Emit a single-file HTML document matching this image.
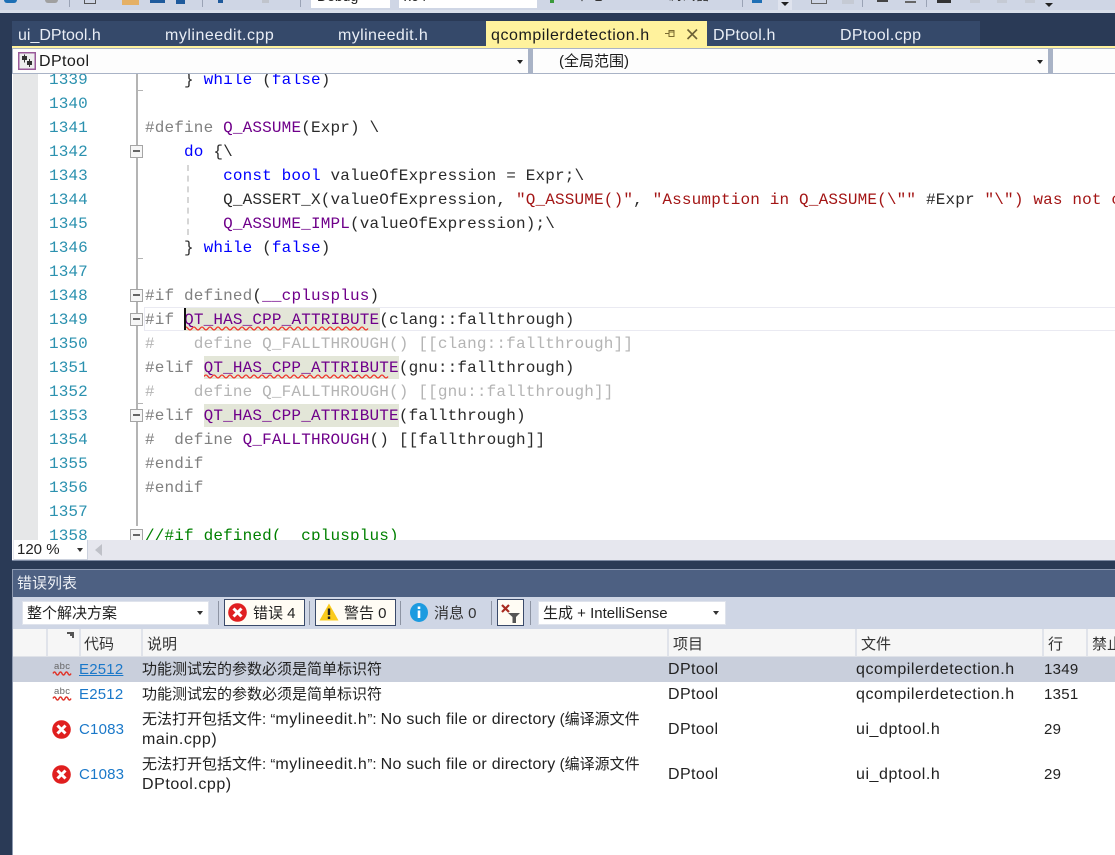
<!DOCTYPE html>
<html><head><meta charset="utf-8"><style>
html,body{margin:0;padding:0;width:1115px;height:855px;overflow:hidden;background:#fff}
#r{position:relative;width:1115px;height:855px;overflow:hidden;background:#fff;font-family:"Liberation Sans","Noto Sans CJK SC",sans-serif;font-size:15px;color:#222}
.a{position:absolute}
.t{position:absolute;white-space:pre;line-height:20px}
.l{font-size:16px;letter-spacing:.55px}
.tab{position:absolute;top:25px;line-height:22px;color:#e8edf5;white-space:pre;font-size:16px;letter-spacing:.5px}
#code{position:absolute;left:145px;top:74px;width:970px;height:466px;overflow:hidden;font-family:"Liberation Mono",monospace;font-size:16px;letter-spacing:.16px;color:#2a2a2a}
#code div{position:absolute;left:0;white-space:pre;line-height:24px;height:24px}
.n{position:absolute;left:49px;font-family:"Liberation Mono",monospace;font-size:16px;letter-spacing:.1px;line-height:24px;color:#2b91af;margin-top:1px}
.k{color:#0000ff}.p{color:#808080}.m{color:#6f008a}.s{color:#a31515}.d{color:#b4b4b4}.g{color:#008000}
.hl{position:absolute;background:#e3e6d8;height:23px}
.fb{position:absolute;left:130px;width:11px;height:11px;border:1px solid #a5a5a5;background:#f6f6f6}
.fb:after{content:"";position:absolute;left:2px;top:4px;width:7px;height:2px;background:#666}
.sep{position:absolute;top:629px;width:2px;height:27px;background:#e0e3ea}
.hd{position:absolute;top:635px;line-height:20px;font-size:15px;color:#333;white-space:pre}
.code{position:absolute;color:#1a78c9;font-size:15px;letter-spacing:.2px;line-height:20px}
</style></head><body><div id="r">

<!-- top toolbar -->
<div class="a" style="left:0;top:0;width:1115px;height:13px;background:#cfd6e5"></div>
<div class="a" style="left:0;top:10px;width:1115px;height:3px;background:#d8dee9"></div>
<div class="a" style="left:4px;top:0;width:13px;height:3px;background:#1c6fb5;border-radius:0 0 7px 7px"></div>
<div class="a" style="left:45px;top:0;width:13px;height:3px;background:#a0a0a0;border-radius:0 0 7px 7px"></div>
<div class="a" style="left:69px;top:0;width:1px;height:7px;background:#9aa3b5"></div>
<div class="a" style="left:84px;top:0;width:10px;height:3px;border:1px solid #555;border-top:0"></div>
<div class="a" style="left:122px;top:0;width:17px;height:5px;background:#e4b066"></div>
<div class="a" style="left:150px;top:0;width:15px;height:3px;background:#1e5a9c"></div>
<div class="a" style="left:176px;top:0;width:9px;height:4px;background:#1e5a9c"></div>
<div class="a" style="left:202px;top:0;width:1px;height:7px;background:#9aa3b5"></div>
<div class="a" style="left:218px;top:0;width:5px;height:3px;background:#1e5a9c"></div>
<div class="a" style="left:262px;top:0;width:7px;height:3px;background:#c0c4cc"></div>
<div class="a" style="left:300px;top:0;width:1px;height:7px;background:#9aa3b5"></div>
<div class="a" style="left:311px;top:0;width:79px;height:8px;background:#fff;overflow:hidden"><span class="a" style="left:6px;top:-12px;font-size:14px;line-height:16px;color:#222">Debug</span></div>
<div class="a" style="left:399px;top:0;width:138px;height:8px;background:#fff;overflow:hidden"><span class="a" style="left:5px;top:-12px;font-size:14px;line-height:16px;color:#222">x64</span></div>
<div class="a" style="left:550px;top:0;width:4px;height:3px;background:#3a9a3a"></div>
<div class="a" style="left:575px;top:0;width:150px;height:4px;overflow:hidden"><span class="a" style="left:0;top:-13px;font-size:14px;line-height:16px;white-space:pre;color:#333">本地 Windows 调试器</span></div>
<div class="a" style="left:742px;top:0;width:1px;height:7px;background:#9aa3b5"></div>
<div class="a" style="left:752px;top:0;width:10px;height:3px;background:#1e6fb5"></div>
<div class="a" style="left:778px;top:0;width:14px;height:10px;background:#dfe3ee"></div>
<div class="a" style="left:781px;top:2px;width:0;height:0;border:4px solid transparent;border-top:4px solid #222"></div>
<div class="a" style="left:811px;top:0;width:14px;height:3px;border:1px solid #666;border-top:0"></div>
<div class="a" style="left:842px;top:0;width:12px;height:4px;background:#c5cad4"></div>
<div class="a" style="left:862px;top:0;width:1px;height:7px;background:#9aa3b5"></div>
<div class="a" style="left:877px;top:0;width:11px;height:2px;background:#444"></div>
<div class="a" style="left:905px;top:1px;width:11px;height:2px;background:#666"></div>
<div class="a" style="left:926px;top:0;width:1px;height:7px;background:#9aa3b5"></div>
<div class="a" style="left:937px;top:0;width:14px;height:3px;background:#333"></div>
<div class="a" style="left:970px;top:0;width:10px;height:3px;background:#c5cad4"></div>
<div class="a" style="left:997px;top:0;width:10px;height:3px;background:#c5cad4"></div>
<div class="a" style="left:1025px;top:0;width:10px;height:3px;background:#c5cad4"></div>
<div class="a" style="left:1045px;top:3px;width:0;height:0;border:4px solid transparent;border-top:4px solid #222"></div>

<!-- navy frame -->
<div class="a" style="left:0;top:13px;width:1115px;height:35px;background:#2a3a56"></div>
<div class="a" style="left:0;top:13px;width:12px;height:842px;background:#2a3a56"></div>
<div class="a" style="left:12px;top:21px;width:968px;height:25px;background:#35496a"></div>
<div class="a" style="left:486px;top:21px;width:221px;height:25px;background:#fff29d"></div>
<div class="a" style="left:12px;top:46px;width:1103px;height:2px;background:#fff29d"></div>
<div class="tab" style="left:18px;letter-spacing:0">ui_DPtool.h</div>
<div class="tab" style="left:165px">mylineedit.cpp</div>
<div class="tab" style="left:338px;letter-spacing:.4px">mylineedit.h</div>
<div class="tab" style="left:491px;color:#1b1b1b;letter-spacing:.55px">qcompilerdetection.h</div>
<div class="tab" style="left:713px;letter-spacing:.15px">DPtool.h</div>
<div class="tab" style="left:840px;letter-spacing:.3px">DPtool.cpp</div>
<svg class="a" style="left:664px;top:28px" width="13" height="12" viewBox="0 0 13 12"><path d="M1 5.5H5M5 2.5V8.5H10V2.5ZM5 4H10" fill="none" stroke="#7a6a30" stroke-width="1"/></svg>
<svg class="a" style="left:686px;top:28px" width="13" height="13" viewBox="0 0 13 13"><path d="M1.5 1.5L11 11M11 1.5L1.5 11" fill="none" stroke="#6d6235" stroke-width="1.6"/></svg>

<!-- navigation bar -->
<div class="a" style="left:12px;top:48px;width:1103px;height:26px;background:#a9b3c6"></div>
<div class="a" style="left:13px;top:49px;width:515px;height:24px;background:#fdfdfd"></div>
<div class="a" style="left:533px;top:49px;width:515px;height:24px;background:#fdfdfd"></div>
<div class="a" style="left:1053px;top:49px;width:62px;height:24px;background:#fdfdfd"></div>
<svg class="a" style="left:18px;top:52px" width="18" height="18" viewBox="0 0 18 18"><rect x=".75" y=".75" width="16.5" height="16.5" fill="#eee" stroke="#9a5a9a" stroke-width="1.5"/><path d="M4 4h5v4H4zM9 9h5v4H9z" fill="#333"/><path d="M6.5 2.5v8M11.5 7v8" stroke="#333"/></svg>
<div class="t" style="left:39px;top:52px;font-size:16px;letter-spacing:.4px;color:#1b1b1b">DPtool</div>
<div class="t" style="left:559px;top:52px;font-size:15px;color:#1b1b1b">(全局范围)</div>
<div class="a" style="left:517px;top:60px;width:0;height:0;border:3.5px solid transparent;border-top:4px solid #222"></div>
<div class="a" style="left:1037px;top:60px;width:0;height:0;border:3.5px solid transparent;border-top:4px solid #222"></div>

<!-- editor -->
<div class="a" style="left:13px;top:74px;width:25px;height:466px;background:#e6e7e8"></div>
<div class="a" style="left:13px;top:74px;width:125px;height:466px;overflow:hidden">
<div class="n" style="left:36px;top:-7px">1339</div><div class="n" style="left:36px;top:17px">1340</div><div class="n" style="left:36px;top:41px">1341</div><div class="n" style="left:36px;top:65px">1342</div><div class="n" style="left:36px;top:89px">1343</div><div class="n" style="left:36px;top:113px">1344</div><div class="n" style="left:36px;top:137px">1345</div><div class="n" style="left:36px;top:161px">1346</div><div class="n" style="left:36px;top:185px">1347</div><div class="n" style="left:36px;top:209px">1348</div><div class="n" style="left:36px;top:233px">1349</div><div class="n" style="left:36px;top:257px">1350</div><div class="n" style="left:36px;top:281px">1351</div><div class="n" style="left:36px;top:305px">1352</div><div class="n" style="left:36px;top:329px">1353</div><div class="n" style="left:36px;top:353px">1354</div><div class="n" style="left:36px;top:377px">1355</div><div class="n" style="left:36px;top:401px">1356</div><div class="n" style="left:36px;top:425px">1357</div><div class="n" style="left:36px;top:449px">1358</div>
</div>

<div class="a" style="left:136px;top:74px;width:2px;height:452px;background:#b4b4b4"></div>
<div class="a" style="left:137px;top:90px;width:6px;height:1px;background:#b4b4b4"></div>
<div class="a" style="left:137px;top:258px;width:6px;height:1px;background:#b4b4b4"></div>
<div class="a" style="left:137px;top:403px;width:6px;height:1px;background:#b4b4b4"></div>
<div class="a" style="left:187px;top:165px;width:0;height:70px;border-left:2px dashed #d6d6d6"></div>

<div class="a" style="left:144px;top:307px;width:971px;height:22px;border:1px solid #eaeaf2;border-right:0"></div>
<div class="hl" style="left:184px;top:308px;width:196px"></div>
<div class="hl" style="left:204px;top:356px;width:195px"></div>
<div class="hl" style="left:204px;top:404px;width:195px"></div>
<div class="a" style="left:184px;top:308px;width:2px;height:22px;background:#111;z-index:3"></div>

<div id="code">
<div style="top:-6px">    } <span class="k">while</span> (<span class="k">false</span>)</div>
<div style="top:42px"><span class="p">#define</span> <span class="m">Q_ASSUME</span>(Expr) \</div>
<div style="top:66px">    <span class="k">do</span> {\</div>
<div style="top:90px">        <span class="k">const</span> <span class="k">bool</span> valueOfExpression = Expr;\</div>
<div style="top:114px">        Q_ASSERT_X(valueOfExpression, <span class="s">"Q_ASSUME()"</span>, <span class="s">"Assumption in Q_ASSUME(\""</span> #Expr <span class="s">"\") was not correctly</span></div>
<div style="top:138px">        <span class="m">Q_ASSUME_IMPL</span>(valueOfExpression);\</div>
<div style="top:162px">    } <span class="k">while</span> (<span class="k">false</span>)</div>
<div style="top:210px"><span class="p">#if defined</span>(<span class="m">__cplusplus</span>)</div>
<div style="top:234px"><span class="p">#if</span> <span class="m">QT_HAS_CPP_ATTRIBUTE</span>(clang::fallthrough)</div>
<div style="top:258px" class="d">#    define Q_FALLTHROUGH() [[clang::fallthrough]]</div>
<div style="top:282px"><span class="p">#elif</span> <span class="m">QT_HAS_CPP_ATTRIBUTE</span>(gnu::fallthrough)</div>
<div style="top:306px" class="d">#    define Q_FALLTHROUGH() [[gnu::fallthrough]]</div>
<div style="top:330px"><span class="p">#elif</span> <span class="m">QT_HAS_CPP_ATTRIBUTE</span>(fallthrough)</div>
<div style="top:354px"><span class="p">#  define</span> <span class="m">Q_FALLTHROUGH</span>() [[fallthrough]]</div>
<div style="top:378px"><span class="p">#endif</span></div>
<div style="top:402px"><span class="p">#endif</span></div>
<div style="top:450px" class="g">//#if defined(__cplusplus)</div>
</div>

<svg class="a" style="left:184px;top:326px;z-index:2" width="196" height="5" viewBox="0 0 196 5"><path d="M0 2.5q2-3 4 0t4 0 4 0 4 0 4 0 4 0 4 0 4 0 4 0 4 0 4 0 4 0 4 0 4 0 4 0 4 0 4 0 4 0 4 0 4 0 4 0 4 0 4 0 4 0 4 0 4 0 4 0 4 0 4 0 4 0 4 0 4 0 4 0 4 0 4 0 4 0 4 0 4 0 4 0 4 0 4 0 4 0 4 0 4 0 4 0 4 0" fill="none" stroke="#f0352a" stroke-width="1.3"/></svg>
<svg class="a" style="left:204px;top:374px;z-index:2" width="196" height="5" viewBox="0 0 196 5"><path d="M0 2.5q2-3 4 0t4 0 4 0 4 0 4 0 4 0 4 0 4 0 4 0 4 0 4 0 4 0 4 0 4 0 4 0 4 0 4 0 4 0 4 0 4 0 4 0 4 0 4 0 4 0 4 0 4 0 4 0 4 0 4 0 4 0 4 0 4 0 4 0 4 0 4 0 4 0 4 0 4 0 4 0 4 0 4 0 4 0 4 0 4 0 4 0 4 0" fill="none" stroke="#f0352a" stroke-width="1.3"/></svg>

<div class="fb" style="top:145px"></div><div class="fb" style="top:289px"></div><div class="fb" style="top:313px"></div><div class="fb" style="top:409px"></div>
<div class="a" style="left:130px;top:529px;width:13px;height:11px;overflow:hidden"><div class="fb" style="left:0;top:0"></div></div>

<!-- scrollbar row -->
<div class="a" style="left:13px;top:540px;width:1102px;height:20px;background:#e6e7ee"></div>
<div class="a" style="left:14px;top:540px;width:73px;height:19px;background:#fff;border-right:1px solid #ccd2de;border-bottom:1px solid #ccd2de"></div>
<div class="t" style="left:17px;top:540px;font-size:15px;color:#222">120 %</div>
<div class="a" style="left:77px;top:548px;width:0;height:0;border:3.5px solid transparent;border-top:4px solid #333"></div>
<div class="a" style="left:95px;top:544px;width:0;height:0;border:6px solid transparent;border-right:7px solid #bfc1c8;border-left:0"></div>
<div class="a" style="left:12px;top:560px;width:1103px;height:10px;background:#2a3a56"></div>
<div class="a" style="left:12px;top:560px;width:1103px;height:1px;background:#7d8aa3"></div>

<!-- error list panel -->
<div class="a" style="left:12px;top:569px;width:1103px;height:28px;background:#4d6082;border-top:1px solid #8b99b3;box-sizing:border-box"></div>
<div class="t" style="left:17px;top:574px;font-size:15px;color:#eef1f6">错误列表</div>
<div class="a" style="left:13px;top:597px;width:1102px;height:32px;background:#cfd6e5"></div>
<div class="a" style="left:12px;top:569px;width:1px;height:286px;background:#8e9ab0"></div>

<div class="a" style="left:22px;top:601px;width:187px;height:24px;background:#fff;border:1px solid #dfe3ec;box-sizing:border-box"></div>
<div class="t" style="left:27px;top:604px;font-size:15px;color:#222">整个解决方案</div>
<div class="a" style="left:197px;top:611px;width:0;height:0;border:3.5px solid transparent;border-top:4px solid #333"></div>
<div class="a" style="left:218px;top:601px;width:1px;height:24px;background:#8d94a3"></div>

<div class="a" style="left:224px;top:599px;width:81px;height:27px;background:#fffcf4;border:1px solid #3a4a6a;box-sizing:border-box"></div>
<svg class="a" style="left:228px;top:603px" width="19" height="19" viewBox="0 0 19 19"><circle cx="9.5" cy="9.5" r="9.3" fill="#e01f1f"/><path d="M5.5 5.5L13.5 13.5M13.5 5.5L5.5 13.5" stroke="#fff" stroke-width="3"/></svg>
<div class="t" style="left:253px;top:604px;font-size:15px;color:#222">错误 4</div>
<div class="a" style="left:309px;top:601px;width:1px;height:24px;background:#8d94a3"></div>

<div class="a" style="left:315px;top:599px;width:81px;height:27px;background:#fffcf4;border:1px solid #3a4a6a;box-sizing:border-box"></div>
<svg class="a" style="left:319px;top:603px" width="20" height="18" viewBox="0 0 20 18"><path d="M10 .5L19.5 17.5H.5Z" fill="#fbcb1c"/><path d="M10 5.5V12M10 13.5V16" stroke="#222" stroke-width="2.4"/></svg>
<div class="t" style="left:344px;top:604px;font-size:15px;color:#222">警告 0</div>
<div class="a" style="left:400px;top:601px;width:1px;height:24px;background:#8d94a3"></div>

<svg class="a" style="left:410px;top:603px" width="18" height="19" viewBox="0 0 18 19"><ellipse cx="9" cy="9.5" rx="9" ry="9.5" fill="#1c9be0"/><path d="M9 7.5V15M9 3.5V6" stroke="#fff" stroke-width="2.6"/></svg>
<div class="t" style="left:434px;top:604px;font-size:15px;color:#333">消息 0</div>
<div class="a" style="left:491px;top:601px;width:1px;height:24px;background:#8d94a3"></div>

<div class="a" style="left:497px;top:599px;width:27px;height:27px;background:#fffcf4;border:1px solid #3a4a6a;box-sizing:border-box"></div>
<svg class="a" style="left:497px;top:599px" width="27" height="27" viewBox="0 0 27 27"><path d="M5 6L12 13M12 6L5 13" stroke="#a82a20" stroke-width="2.2"/><path d="M11 14H23L19 18V24H15.5V18Z" fill="#555"/></svg>
<div class="a" style="left:530px;top:601px;width:1px;height:24px;background:#8d94a3"></div>

<div class="a" style="left:538px;top:601px;width:188px;height:24px;background:#fff;border:1px solid #dfe3ec;box-sizing:border-box"></div>
<div class="t" style="left:543px;top:604px;font-size:15px;color:#222">生成 + IntelliSense</div>
<div class="a" style="left:713px;top:611px;width:0;height:0;border:3.5px solid transparent;border-top:4px solid #333"></div>

<!-- table header -->
<div class="a" style="left:13px;top:629px;width:1102px;height:27px;background:#f6f6f6"></div>
<div class="a" style="left:13px;top:656px;width:1102px;height:1px;background:#dfe2e8"></div>
<div class="sep" style="left:46px"></div><div class="sep" style="left:79px"></div><div class="sep" style="left:141px"></div><div class="sep" style="left:667px"></div><div class="sep" style="left:855px"></div><div class="sep" style="left:1042px"></div><div class="sep" style="left:1086px"></div>
<svg class="a" style="left:66px;top:631px" width="9" height="9" viewBox="0 0 9 9"><path d="M1 1h7v2H1zM4 3h4v2H4zM6 5h2v2H6z" fill="#555"/></svg>
<div class="hd" style="left:84px">代码</div>
<div class="hd" style="left:147px">说明</div>
<div class="hd" style="left:673px">项目</div>
<div class="hd" style="left:861px">文件</div>
<div class="hd" style="left:1048px">行</div>
<div class="hd" style="left:1092px">禁止</div>

<!-- rows -->
<div class="a" style="left:13px;top:657px;width:1102px;height:25px;background:#c9cfdc"></div>

<svg class="a" style="left:52px;top:660px" width="20" height="17" viewBox="0 0 20 17"><text x="2" y="9" font-family="Liberation Sans" font-size="9.5" textLength="16" fill="#666">abc</text><path d="M1 13.5q1.5-3 3 0t3 0 3 0 3 0 3 0 3 0" fill="none" stroke="#e0352b" stroke-width="1.4"/></svg>
<div class="code" style="left:79px;top:660px;text-decoration:underline">E2512</div>
<div class="t" style="left:142px;top:660px">功能测试宏的参数必须是简单标识符</div>
<div class="t l" style="left:668px;top:660px;letter-spacing:.4px">DPtool</div>
<div class="t l" style="left:856px;top:660px">qcompilerdetection.h</div>
<div class="t" style="left:1044px;top:660px;font-size:15px;letter-spacing:.3px">1349</div>

<svg class="a" style="left:52px;top:685px" width="20" height="17" viewBox="0 0 20 17"><text x="2" y="9" font-family="Liberation Sans" font-size="9.5" textLength="16" fill="#666">abc</text><path d="M1 13.5q1.5-3 3 0t3 0 3 0 3 0 3 0 3 0" fill="none" stroke="#e0352b" stroke-width="1.4"/></svg>
<div class="code" style="left:79px;top:685px">E2512</div>
<div class="t" style="left:142px;top:685px">功能测试宏的参数必须是简单标识符</div>
<div class="t l" style="left:668px;top:685px;letter-spacing:.4px">DPtool</div>
<div class="t l" style="left:856px;top:685px">qcompilerdetection.h</div>
<div class="t" style="left:1044px;top:685px;font-size:15px;letter-spacing:.3px">1351</div>

<svg class="a" style="left:52px;top:720px" width="19" height="19" viewBox="0 0 19 19"><circle cx="9.5" cy="9.5" r="9.3" fill="#e01f1f"/><path d="M5.5 5.5L13.5 13.5M13.5 5.5L5.5 13.5" stroke="#fff" stroke-width="3"/></svg>
<div class="code" style="left:79px;top:720px">C1083</div>
<div class="t" style="left:142px;top:710px">无法打开包括文件: “<span class="l">mylineedit.h</span>”: <span class="l" style="letter-spacing:.27px">No such file or directory</span> (编译源文件</div>
<div class="t l" style="left:142px;top:730px">main.cpp)</div>
<div class="t l" style="left:668px;top:720px;letter-spacing:.4px">DPtool</div>
<div class="t l" style="left:856px;top:720px">ui_dptool.h</div>
<div class="t" style="left:1044px;top:720px;font-size:15px;letter-spacing:.3px">29</div>

<svg class="a" style="left:52px;top:765px" width="19" height="19" viewBox="0 0 19 19"><circle cx="9.5" cy="9.5" r="9.3" fill="#e01f1f"/><path d="M5.5 5.5L13.5 13.5M13.5 5.5L5.5 13.5" stroke="#fff" stroke-width="3"/></svg>
<div class="code" style="left:79px;top:765px">C1083</div>
<div class="t" style="left:142px;top:755px">无法打开包括文件: “<span class="l">mylineedit.h</span>”: <span class="l" style="letter-spacing:.27px">No such file or directory</span> (编译源文件</div>
<div class="t l" style="left:142px;top:775px">DPtool.cpp)</div>
<div class="t l" style="left:668px;top:765px;letter-spacing:.4px">DPtool</div>
<div class="t l" style="left:856px;top:765px">ui_dptool.h</div>
<div class="t" style="left:1044px;top:765px;font-size:15px;letter-spacing:.3px">29</div>

</div></body></html>
